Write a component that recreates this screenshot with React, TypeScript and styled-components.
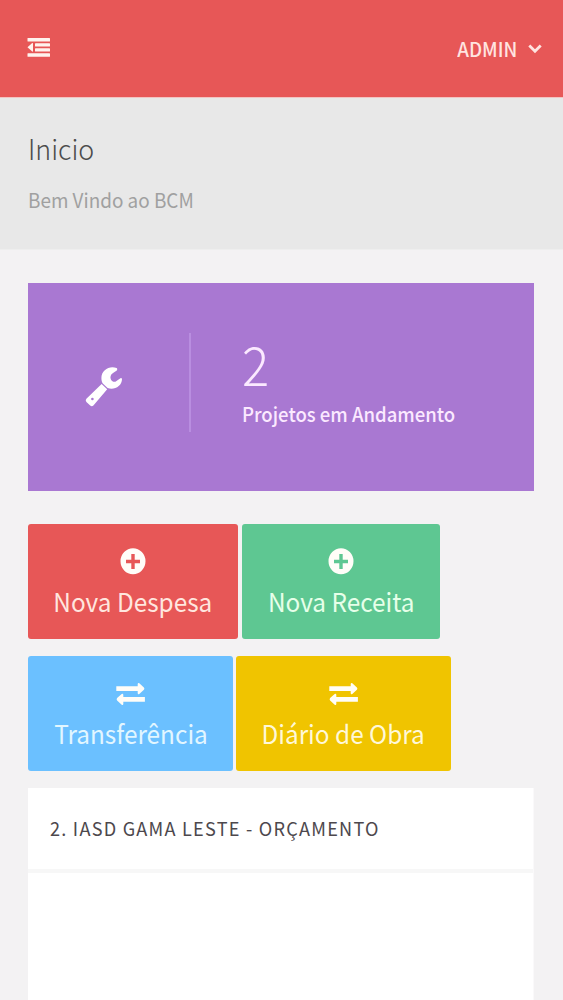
import React from 'react';
import styled, { createGlobalStyle } from 'styled-components';

const Global = createGlobalStyle`
  * { box-sizing: border-box; }
  html, body { margin: 0; padding: 0; background: #f3f2f3; }
  body { font-family: "Noto Sans CJK JP", "Noto Sans", sans-serif; overflow: hidden; }
  h1, h2, p { margin: 0; font-weight: 400; }
  svg { display: block; }
`;

const Page = styled.div`
  height: 1000px;
  overflow: hidden;
  display: flex;
  flex-direction: column;
`;

const TopBar = styled.header`
  flex: none;
  height: 98px;
  padding: 0 21px 0 27px;
  background: #e75757;
  border-bottom: 1px solid #f3c4c2;
  color: #ffe4e0;
  display: flex;
  align-items: center;
  justify-content: space-between;
`;

const MenuButton = styled.button`
  border: 0;
  padding: 0;
  margin-top: -2px;
  background: none;
  color: #fff3ee;
`;

const UserMenu = styled.div`
  display: flex;
  align-items: center;
  gap: 11px;
`;

const UserName = styled.span`
  font-size: 19.5px;
  line-height: 28px;
  font-weight: 500;
  transform: scaleX(0.965);
  transform-origin: right center;
`;

const Heading = styled.section`
  flex: none;
  height: 152px;
  padding: 30px 28px 0;
  background: #e8e8e8;
  border-bottom: 1px solid #eeeeee;
`;

const Title = styled.h1`
  font-size: 28px;
  line-height: 40px;
  font-weight: 300;
  transform: scaleX(0.957);
  transform-origin: left center;
  color: #4c4c4c;
`;

const Subtitle = styled.p`
  margin-top: 17px;
  font-size: 20px;
  line-height: 30px;
  transform: scaleX(0.945);
  transform-origin: left center;
  color: #a0a0a0;
`;

const Content = styled.main`
  flex: 1;
  padding: 33px 29px 0 28px;
  display: flex;
  flex-direction: column;
`;

const Stat = styled.section`
  flex: none;
  height: 208px;
  background: #a978d2;
  color: #fbe9ff;
  display: flex;
  align-items: center;
`;

const StatIcon = styled.div`
  width: 163px;
  height: 99px;
  margin-top: -10px;
  border-right: 2px solid #b98ee0;
  padding: 34px 0 0 57px;
  color: #fff;
`;

const StatText = styled.div`
  padding-left: 51px;
  margin-top: -7px;
`;

const StatValue = styled.p`
  margin: -5px 0 5px 0;
  font-size: 54px;
  line-height: 60px;
  font-weight: 300;
  transform: scaleX(0.94);
  transform-origin: left center;
`;

const StatLabel = styled.p`
  font-size: 20px;
  line-height: 32px;
  font-weight: 500;
  white-space: nowrap;
  transform: scaleX(0.926);
  transform-origin: left center;
`;

const Actions = styled.div`
  margin-top: 33px;
  display: grid;
  row-gap: 17px;
`;

const ActionRow = styled.div<{ $gap: number }>`
  display: flex;
  gap: ${p => p.$gap}px;
`;

const Action = styled.button<{ $bg: string; $fg: string; $width: number }>`
  width: ${p => p.$width}px;
  height: 115px;
  border: 0;
  border-radius: 3px;
  padding: 23px 0 0;
  background: ${p => p.$bg};
  color: ${p => p.$fg};
  font-family: inherit;
  display: flex;
  flex-direction: column;
  align-items: center;
`;

const ActionIcon = styled.span`
  height: 29px;
  color: #fffdf8;
`;

const ActionLabel = styled.span`
  font-size: 26px;
  line-height: 50px;
  white-space: nowrap;
  transform: scaleX(0.937);
`;

const Panel = styled.section`
  flex: 1;
  margin-top: 17px;
  background: #fff;
  border-right: 1px solid #faf9fa;
`;

const PanelHeader = styled.header`
  height: 85px;
  padding: 26px 22px 0;
  border-bottom: 4px solid #f7f7f7;
`;

const PanelTitle = styled.h2`
  font-size: 19px;
  line-height: 28px;
  letter-spacing: 1.3px;
  color: #4d484d;
  white-space: nowrap;
  transform: scaleX(0.953);
  transform-origin: left center;
`;

const OutdentIcon = () => (
  <svg width="23" height="19" viewBox="0 0 23 19" fill="currentColor">
    <rect x="0.5" y="0" width="22.5" height="3.5" rx="0.5" />
    <rect x="8" y="5.2" width="15" height="3.2" rx="0.5" />
    <rect x="8" y="10.3" width="15" height="3.2" rx="0.5" />
    <rect x="0.5" y="15.3" width="22.5" height="3.5" rx="0.5" />
    <path d="M0.5 9.3 L5.2 5 Q6 4.8 6 5.6 V13 Q6 13.8 5.2 13.6 Z" />
  </svg>
);

const ChevronIcon = () => (
  <svg width="14" height="10" viewBox="0 0 14 10" fill="none" stroke="currentColor" strokeWidth="2.8">
    <path d="M1.3 1.5 L7 7.2 L12.7 1.5" />
  </svg>
);

const WrenchIcon = () => (
  <svg width="38" height="41" viewBox="0 0 38 41">
    <path
      fill="currentColor"
      d="M31.6 1 C25 -1.8 16.4 2.6 16.4 11 C16.4 13.6 17 15.2 17.8 16.6 L22.6 21 C29 23.4 37 19.4 37 12 Q36.6 10.6 35.4 11.2 L30.4 14.8 Q26.4 15 25.6 11.4 Q24.8 8 28 6 L31.8 3.4 Q32.8 2 31.6 1 Z"
    />
    <path
      fill="currentColor"
      fillRule="evenodd"
      d="M16.6 17 L22.2 22.2 L8.4 38.4 Q6.8 39.9 5.2 38.4 L1.4 34.9 Q0 33.3 1.4 31.7 Z M7.4 30.7 A1.3 1.3 0 1 0 7.4 33.3 A1.3 1.3 0 1 0 7.4 30.7 Z"
    />
  </svg>
);

const PlusCircleIcon = () => (
  <svg width="26" height="28" viewBox="0 0 26 28">
    <path
      fill="currentColor"
      fillRule="evenodd"
      d="M13 1.2 A12.5 13 0 1 0 13 27.2 A12.5 13 0 1 0 13 1.2 Z M11.3 7 H14.7 V12.8 H20 V16.2 H14.7 V22 H11.3 V16.2 H6 V12.8 H11.3 Z"
    />
  </svg>
);

const ExchangeIcon = () => (
  <svg width="30" height="28" viewBox="0 -1 30 28" fill="currentColor">
    <path d="M0.3 6.2 H21.7 V4 Q21.9 2.6 23.3 3.2 L27.9 7.4 Q28.9 8.6 27.9 9.8 L23.3 14 Q21.9 14.8 21.7 13.2 V11 H0.3 Z" />
    <path d="M28.9 16.9 H7.3 V14.7 Q7.1 13.3 5.7 13.9 L1.1 18.1 Q0.1 19.3 1.1 20.5 L5.7 24.7 Q7.1 25.5 7.3 23.9 V21.7 H28.9 Z" />
  </svg>
);

export default function App() {
  return (
    <Page>
      <Global />
      <TopBar>
        <MenuButton aria-label="Menu"><OutdentIcon /></MenuButton>
        <UserMenu>
          <UserName>ADMIN</UserName>
          <ChevronIcon />
        </UserMenu>
      </TopBar>
      <Heading>
        <Title>Inicio</Title>
        <Subtitle>Bem Vindo ao BCM</Subtitle>
      </Heading>
      <Content>
        <Stat>
          <StatIcon><WrenchIcon /></StatIcon>
          <StatText>
            <StatValue>2</StatValue>
            <StatLabel>Projetos em Andamento</StatLabel>
          </StatText>
        </Stat>
        <Actions>
          <ActionRow $gap={4}>
            <Action $bg="#e75757" $fg="#ffe6df" $width={210}>
              <ActionIcon><PlusCircleIcon /></ActionIcon>
              <ActionLabel>Nova Despesa</ActionLabel>
            </Action>
            <Action $bg="#5ec792" $fg="#e6ffe9" $width={198}>
              <ActionIcon><PlusCircleIcon /></ActionIcon>
              <ActionLabel>Nova Receita</ActionLabel>
            </Action>
          </ActionRow>
          <ActionRow $gap={3}>
            <Action $bg="#6bc0ff" $fg="#e2f6ff" $width={205}>
              <ActionIcon><ExchangeIcon /></ActionIcon>
              <ActionLabel>Transferência</ActionLabel>
            </Action>
            <Action $bg="#f0c400" $fg="#fff8d8" $width={215}>
              <ActionIcon><ExchangeIcon /></ActionIcon>
              <ActionLabel>Diário de Obra</ActionLabel>
            </Action>
          </ActionRow>
        </Actions>
        <Panel>
          <PanelHeader>
            <PanelTitle>2. IASD GAMA LESTE - ORÇAMENTO</PanelTitle>
          </PanelHeader>
        </Panel>
      </Content>
    </Page>
  );
}
